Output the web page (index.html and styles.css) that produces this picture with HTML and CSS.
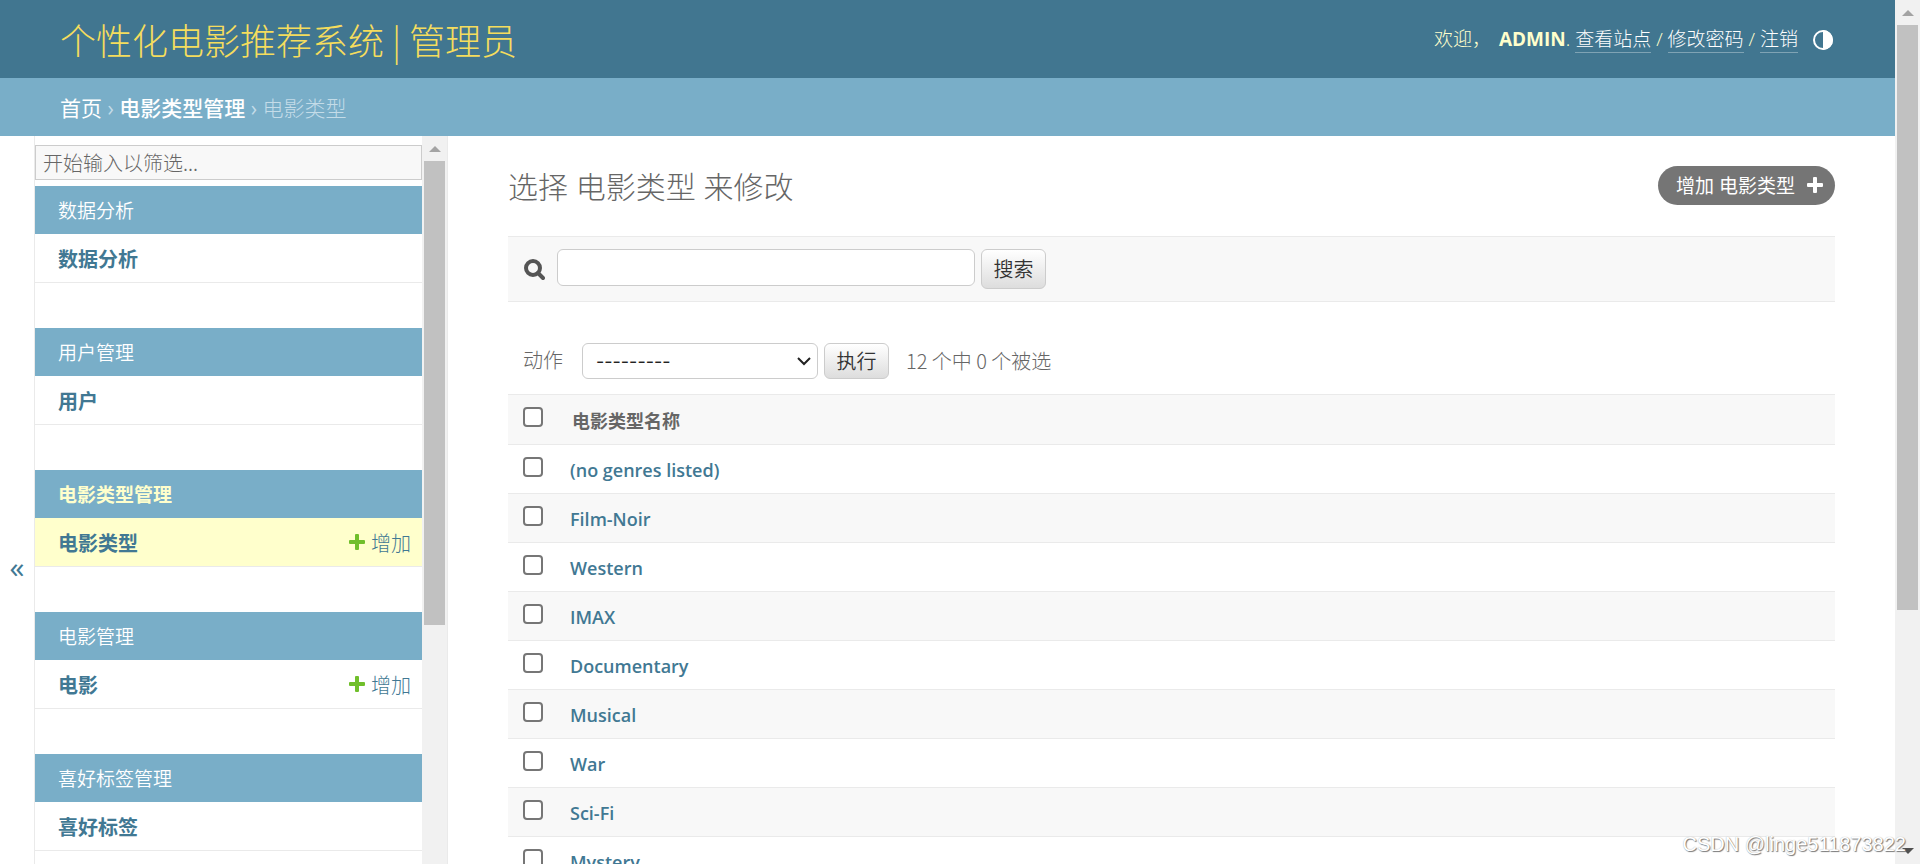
FILE: index.html
```
<!DOCTYPE html>
<html lang="zh-Hans">
<head>
<meta charset="utf-8">
<title>选择 电影类型 来修改 | 管理员</title>
<link rel="stylesheet" href="styles.css">
</head>
<body>
<div class="window">
  <div class="page">
    <header class="header">
      <h1 class="site-name"><a href="#">个性化电影推荐系统 | 管理员</a></h1>
      <div class="user-tools">
        <span class="welcome">欢迎，</span>
        <span><strong>ADMIN</strong>. <a href="#">查看站点</a> / <a href="#">修改密码</a> / <a href="#">注销</a></span>
        <button class="theme-toggle" type="button" aria-label="切换主题">
          <svg viewBox="0 0 20 20" width="20" height="20"><circle cx="10" cy="10" r="9" fill="none" stroke="#fff" stroke-width="2"/><path d="M10 0a10 10 0 0 1 0 20z" fill="#fff"/></svg>
        </button>
      </div>
    </header>
    <nav class="breadcrumbs" aria-label="面包屑"><a href="#">首页</a> <i>›</i> <a class="strong" href="#">电影类型管理</a> <i>›</i> <span>电影类型</span></nav>
    <div class="body">
      <button class="nav-toggle" type="button" aria-label="切换导航">«</button>
      <aside class="sidebar">
        <nav class="sidebar-content">
          <input class="nav-filter" type="search" placeholder="开始输入以筛选..." aria-label="筛选导航项">
          <section class="module">
            <h2><a href="#">数据分析</a></h2>
            <div class="model"><a class="name" href="#">数据分析</a></div>
          </section>
          <section class="module">
            <h2><a href="#">用户管理</a></h2>
            <div class="model"><a class="name" href="#">用户</a></div>
          </section>
          <section class="module current">
            <h2><a href="#">电影类型管理</a></h2>
            <div class="model"><a class="name" href="#">电影类型</a><a class="add" href="#"><svg viewBox="0 0 16 16" width="16" height="16"><path d="M7 0h2q1 0 1 1v5h5q1 0 1 1v2q0 1-1 1h-5v5q0 1-1 1h-2q-1 0-1-1v-5h-5q-1 0-1-1v-2q0-1 1-1h5v-5q0-1 1-1z" fill="#70bf2b"/></svg>增加</a></div>
          </section>
          <section class="module">
            <h2><a href="#">电影管理</a></h2>
            <div class="model"><a class="name" href="#">电影</a><a class="add" href="#"><svg viewBox="0 0 16 16" width="16" height="16"><path d="M7 0h2q1 0 1 1v5h5q1 0 1 1v2q0 1-1 1h-5v5q0 1-1 1h-2q-1 0-1-1v-5h-5q-1 0-1-1v-2q0-1 1-1h5v-5q0-1 1-1z" fill="#70bf2b"/></svg>增加</a></div>
          </section>
          <section class="module">
            <h2><a href="#">喜好标签管理</a></h2>
            <div class="model"><a class="name" href="#">喜好标签</a></div>
          </section>
        </nav>
        <div class="scrollbar" aria-hidden="true">
          <span class="arrow up"></span>
          <span class="thumb nav-thumb"></span>
        </div>
      </aside>
      <main class="content">
        <div class="title-row">
          <h2 class="title">选择 电影类型 来修改</h2>
          <a class="add-link" href="#">增加 电影类型<svg viewBox="0 0 16 16" width="16" height="16"><path d="M7 0h2q1 0 1 1v5h5q1 0 1 1v2q0 1-1 1h-5v5q0 1-1 1h-2q-1 0-1-1v-5h-5q-1 0-1-1v-2q0-1 1-1h5v-5q0-1 1-1z" fill="#fff"/></svg></a>
        </div>
        <form class="toolbar">
          <label for="searchbar" aria-label="搜索"><svg viewBox="0 0 22 22" width="22" height="22"><circle cx="10" cy="9" r="7" fill="none" stroke="#555" stroke-width="4"/><path d="M15 14l5 5" stroke="#555" stroke-width="4" stroke-linecap="round"/></svg></label>
          <input id="searchbar" class="search-input" type="text">
          <button class="button search-button" type="submit">搜索</button>
        </form>
        <form class="actions">
          <label for="action">动作</label>
          <div class="select-wrap">
            <select id="action"><option>---------</option></select>
            <svg viewBox="0 0 14 10" width="14" height="10"><path d="M1 2l6 6 6-6" fill="none" stroke="#222" stroke-width="2"/></svg>
          </div>
          <button class="button" type="button">执行</button>
          <span class="counter">12 个中 0 个被选</span>
        </form>
        <table class="results">
          <thead><tr><th class="check"><input type="checkbox" aria-label="全选"></th><th class="label">电影类型名称</th></tr></thead>
          <tbody>
            <tr><td class="check"><input type="checkbox" aria-label="(no genres listed)"></td><th><a href="#">(no genres listed)</a></th></tr>
            <tr><td class="check"><input type="checkbox" aria-label="Film-Noir"></td><th><a href="#">Film-Noir</a></th></tr>
            <tr><td class="check"><input type="checkbox" aria-label="Western"></td><th><a href="#">Western</a></th></tr>
            <tr><td class="check"><input type="checkbox" aria-label="IMAX"></td><th><a href="#">IMAX</a></th></tr>
            <tr><td class="check"><input type="checkbox" aria-label="Documentary"></td><th><a href="#">Documentary</a></th></tr>
            <tr><td class="check"><input type="checkbox" aria-label="Musical"></td><th><a href="#">Musical</a></th></tr>
            <tr><td class="check"><input type="checkbox" aria-label="War"></td><th><a href="#">War</a></th></tr>
            <tr><td class="check"><input type="checkbox" aria-label="Sci-Fi"></td><th><a href="#">Sci-Fi</a></th></tr>
            <tr><td class="check"><input type="checkbox" aria-label="Mystery"></td><th><a href="#">Mystery</a></th></tr>
          </tbody>
        </table>
      </main>
    </div>
  </div>
  <div class="scrollbar" aria-hidden="true">
    <span class="arrow up"></span>
    <span class="thumb page-thumb"></span>
    <span class="arrow down"></span>
  </div>
  <div class="watermark">CSDN @linge511873822</div>
</div>
</body>
</html>
```
FILE: styles.css
```
* { box-sizing: border-box; }

body {
  margin: 0;
  background: #fff;
  color: #666;
  font-family: "Open Sans", "Noto Sans CJK SC", sans-serif;
  font-size: 20px;
  font-weight: 300;
  line-height: 28px;
}

a { color: #417893; text-decoration: none; }
h1, h2 { margin: 0; font-weight: 300; }
input, select, button { font: inherit; }
svg { display: block; flex: none; }

.window {
  position: relative;
  display: flex;
  height: 100vh;
  overflow: hidden;
}

.page { flex: 1; min-width: 0; }

/* Header */
.header {
  display: flex;
  align-items: center;
  justify-content: space-between;
  height: 78px;
  padding: 0 60px;
  background: #417690;
  color: #ffc;
}

.site-name {
  font-family: "Noto Sans CJK SC", sans-serif;
  font-size: 36px;
  line-height: 44px;
}
.site-name a { color: #f5dd5d; }

.user-tools { display: flex; align-items: center; font-size: 19px; line-height: 22px; }
.welcome { margin-right: 8px; }
.user-tools strong { font-weight: 700; }
.user-tools a { color: #fff; border-bottom: 1px solid #7fa3b4; }

.theme-toggle {
  margin-left: 15px;
  padding: 2px 2px 0 0;
  border: 0;
  background: none;
}

.breadcrumbs {
  height: 58px;
  padding: 16px 60px;
  background: #79aec8;
  color: #c4dce8;
  font-size: 21px;
  line-height: 28px;
}
.breadcrumbs a { color: #fff; font-weight: 400; }
.breadcrumbs i { font-style: normal; font-weight: 400; }
.breadcrumbs .strong { font-weight: 500; }

/* Sidebar */
.body { display: flex; align-items: flex-start; }

.nav-toggle {
  width: 34px;
  height: 100vh;
  padding: 0 0 2px;
  border: 0;
  background: #fff;
  color: #417893;
  font-size: 30px;
  font-weight: 400;
}

.sidebar {
  display: flex;
  width: 414px;
  height: 100vh;
  border: solid #eaeaea;
  border-width: 0 1px;
}

.sidebar-content { flex: 1; padding-top: 9px; }

.nav-filter {
  display: block;
  width: 100%;
  height: 35px;
  margin-bottom: 6px;
  padding: 2px 7px;
  border: 1px solid #ccc;
  border-radius: 0;
  outline: 0;
  background: #f8f8f8;
  font-family: "Noto Sans CJK SC", sans-serif;
  appearance: none;
}
.nav-filter::placeholder { color: #666; }

.module { margin-bottom: 45px; }
.module h2 {
  height: 48px;
  padding: 11px 23px;
  background: #79aec8;
  font-size: 19px;
  font-weight: 350;
  line-height: 28px;
}
.module h2 a { color: #fff; }
.model {
  display: flex;
  align-items: center;
  justify-content: space-between;
  height: 49px;
  padding: 3px 11px 0 23px;
  border-bottom: 1px solid #eaeaea;
}
.name { font-weight: 700; }
.add { display: flex; align-items: center; gap: 6px; }
.add svg { margin-bottom: 4px; }
.current h2 a { color: #ffc; font-weight: 700; }
.current .model { background: #ffc; }

/* Scrollbars */
.scrollbar {
  display: flex;
  flex-direction: column;
  align-items: center;
  width: 25px;
  background: #f1f1f1;
}
.arrow { border: 6px solid transparent; border-top-width: 0; border-bottom-width: 0; }
.up { margin: 10px 0 9px; border-bottom: 6px solid #a3a3a3; }
.down { margin: auto 0 10px; border-top: 6px solid #505050; }
.thumb { width: 21px; background: #c1c1c1; }
.nav-thumb { height: 53.7%; }
.page-thumb { height: 67.7%; }

/* Content */
.content { flex: 1; min-width: 0; padding: 30px 60px; }

.title-row {
  display: flex;
  align-items: flex-start;
  justify-content: space-between;
  height: 70px;
}
.title { font-size: 30px; line-height: 42px; }
.add-link {
  display: flex;
  align-items: center;
  gap: 12px;
  height: 39px;
  padding: 0 12px 0 18px;
  border-radius: 20px;
  background: #757575;
  color: #fff;
  font-size: 19px;
  font-weight: 400;
}
.add-link svg { margin-bottom: 2px; }

.toolbar {
  display: flex;
  align-items: flex-start;
  height: 66px;
  padding: 12px 15px;
  border: solid #eaeaea;
  border-width: 1px 0;
  background: #f8f8f8;
}
.toolbar label { margin: 10px 12px 0 0; }

.search-input {
  width: 418px;
  height: 37px;
  margin-right: 6px;
  border: 1px solid #ccc;
  border-radius: 6px;
  background: #fff;
}

.button {
  width: 65px;
  height: 36px;
  padding: 2px 0 0;
  border: 1px solid #ccc;
  border-radius: 6px;
  background: linear-gradient(#fff, #ddd);
  color: #333;
  font-weight: 350;
}
.search-button { height: 40px; }

.actions {
  display: flex;
  align-items: center;
  height: 36px;
  margin: 41px 0 15px;
  padding: 0 15px;
}
.select-wrap { position: relative; margin: 0 6px 0 19px; }
.select-wrap select {
  display: block;
  width: 236px;
  height: 36px;
  padding: 2px 13px 0;
  border: 1px solid #ccc;
  border-radius: 6px;
  background: #fff;
  color: #222;
  font-family: Inter, sans-serif;
  font-size: 18px;
  font-weight: 400;
  appearance: none;
}
.select-wrap svg { position: absolute; top: 13px; right: 7px; pointer-events: none; }
.counter { margin-left: 17px; font-family: "Noto Sans CJK SC", sans-serif; }

.results { width: 100%; border-collapse: collapse; border-top: 1px solid #eaeaea; }
.results th, .results td {
  height: 49px;
  padding: 2px 0 0;
  border-bottom: 1px solid #eaeaea;
  text-align: left;
  font-weight: 600;
  font-size: 18px;
}
.results thead th { height: 50px; background: #f8f8f8; }
.results tbody tr:nth-child(even) { background: #f8f8f8; }
.results .check { width: 62px; padding: 12px 15px 0; vertical-align: top; }
.results .label { padding: 2px 0 0 2px; font-weight: 700; }
.results input {
  display: block;
  width: 20px;
  height: 20px;
  margin: 0;
  border: 2px solid #767676;
  border-radius: 4px;
  background: #fff;
  appearance: none;
}

.watermark {
  position: absolute;
  right: 14px;
  bottom: 6px;
  color: #fff;
  font-family: "Liberation Sans", sans-serif;
  font-size: 20px;
  font-weight: 400;
  text-shadow: 1px 1px 1px #777, 0 0 1px #aaa;
}
```
